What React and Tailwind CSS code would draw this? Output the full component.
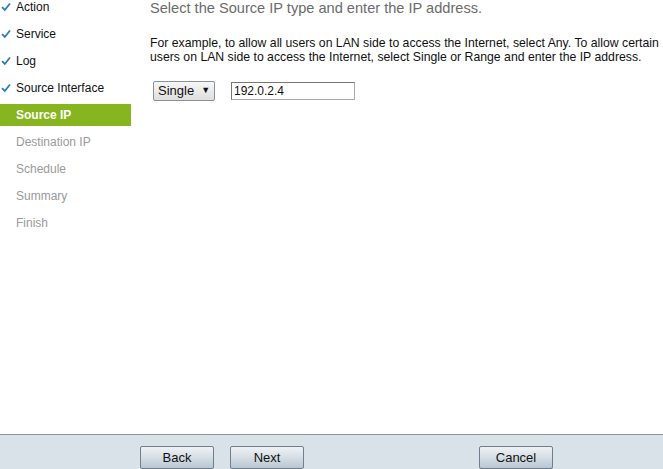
import React from 'react';

const steps = [
    { label: 'Action', done: true },
    { label: 'Service', done: true },
    { label: 'Log', done: true },
    { label: 'Source Interface', done: true },
    { label: 'Source IP', active: true },
    { label: 'Destination IP' },
    { label: 'Schedule' },
    { label: 'Summary' },
    { label: 'Finish' },
];

const Check = () => (
    <svg width="10" height="10" viewBox="0 0 10 10" className="absolute left-[1px] top-[6px]">
        <path d="M1 5.2 L3.8 8 L9 1.5" fill="none" stroke="#2b7bb9" strokeWidth="1.8" />
    </svg>
);

const WizButton = ({ children }) => (
    <button className="w-[74px] h-[23px] rounded-[2px] border border-[#6f7f8d] bg-gradient-to-b from-[#eef2f5] via-[#d6dee5] to-[#b9c6d1] text-[13px] text-[#111]">
        {children}
    </button>
);

export default function App() {
    return (
        <div className="w-[663px] h-[469px] bg-white flex flex-col overflow-hidden font-['Liberation_Sans',Arial,sans-serif]">
            <div className="flex flex-1 min-h-0">
                <aside className="w-[131px] flex-shrink-0 mt-[-4px]">
                    {steps.map(s => (
                        <div
                            key={s.label}
                            className={`relative h-[22px] mb-[5px] pl-4 flex items-center text-[12px] ${s.active ? 'bg-[#86b51f] text-white font-bold' : s.done ? 'text-[#111]' : 'text-[#9a9a9a]'}`}
                        >
                            {s.done && <Check />}
                            {s.label}
                        </div>
                    ))}
                </aside>
                <main className="flex-1 pl-[19px] pr-1">
                    <h1 className="text-[14.6px] leading-[16px] text-[#6b6b6b]">Select the Source IP type and enter the IP address.</h1>
                    <p className="mt-[20px] text-[12.25px] leading-[14px] text-[#111]">
                        For example, to allow all users on LAN side to access the Internet, select Any. To allow certain users on LAN side to access the Internet, select Single or Range and enter the IP address.
                    </p>
                    <div className="flex items-center mt-[17px]">
                        <div className="ml-[3px] w-[62px] h-[20px] border border-[#8a9299] rounded-[2px] bg-gradient-to-b from-[#f7f7f7] to-[#dedede] flex items-center pl-[4px] text-[13px] text-[#111]">
                            Single
                            <span className="ml-[7px] text-[9px]">▼</span>
                        </div>
                        <div className="ml-[16px] w-[124px] h-[18px] border border-[#a9a9a9] border-t-[#777] border-l-[#777] flex items-center pl-[2px] text-[12px] text-[#111]">
                            192.0.2.4
                        </div>
                    </div>
                </main>
            </div>
            <footer className="h-[35px] border-t border-[#8797a5] bg-[#dae2e9] flex items-start pt-[10px]">
                <div className="ml-[140px]"><WizButton>Back</WizButton></div>
                <div className="ml-[16px]"><WizButton>Next</WizButton></div>
                <div className="ml-[175px]"><WizButton>Cancel</WizButton></div>
            </footer>
        </div>
    );
}
